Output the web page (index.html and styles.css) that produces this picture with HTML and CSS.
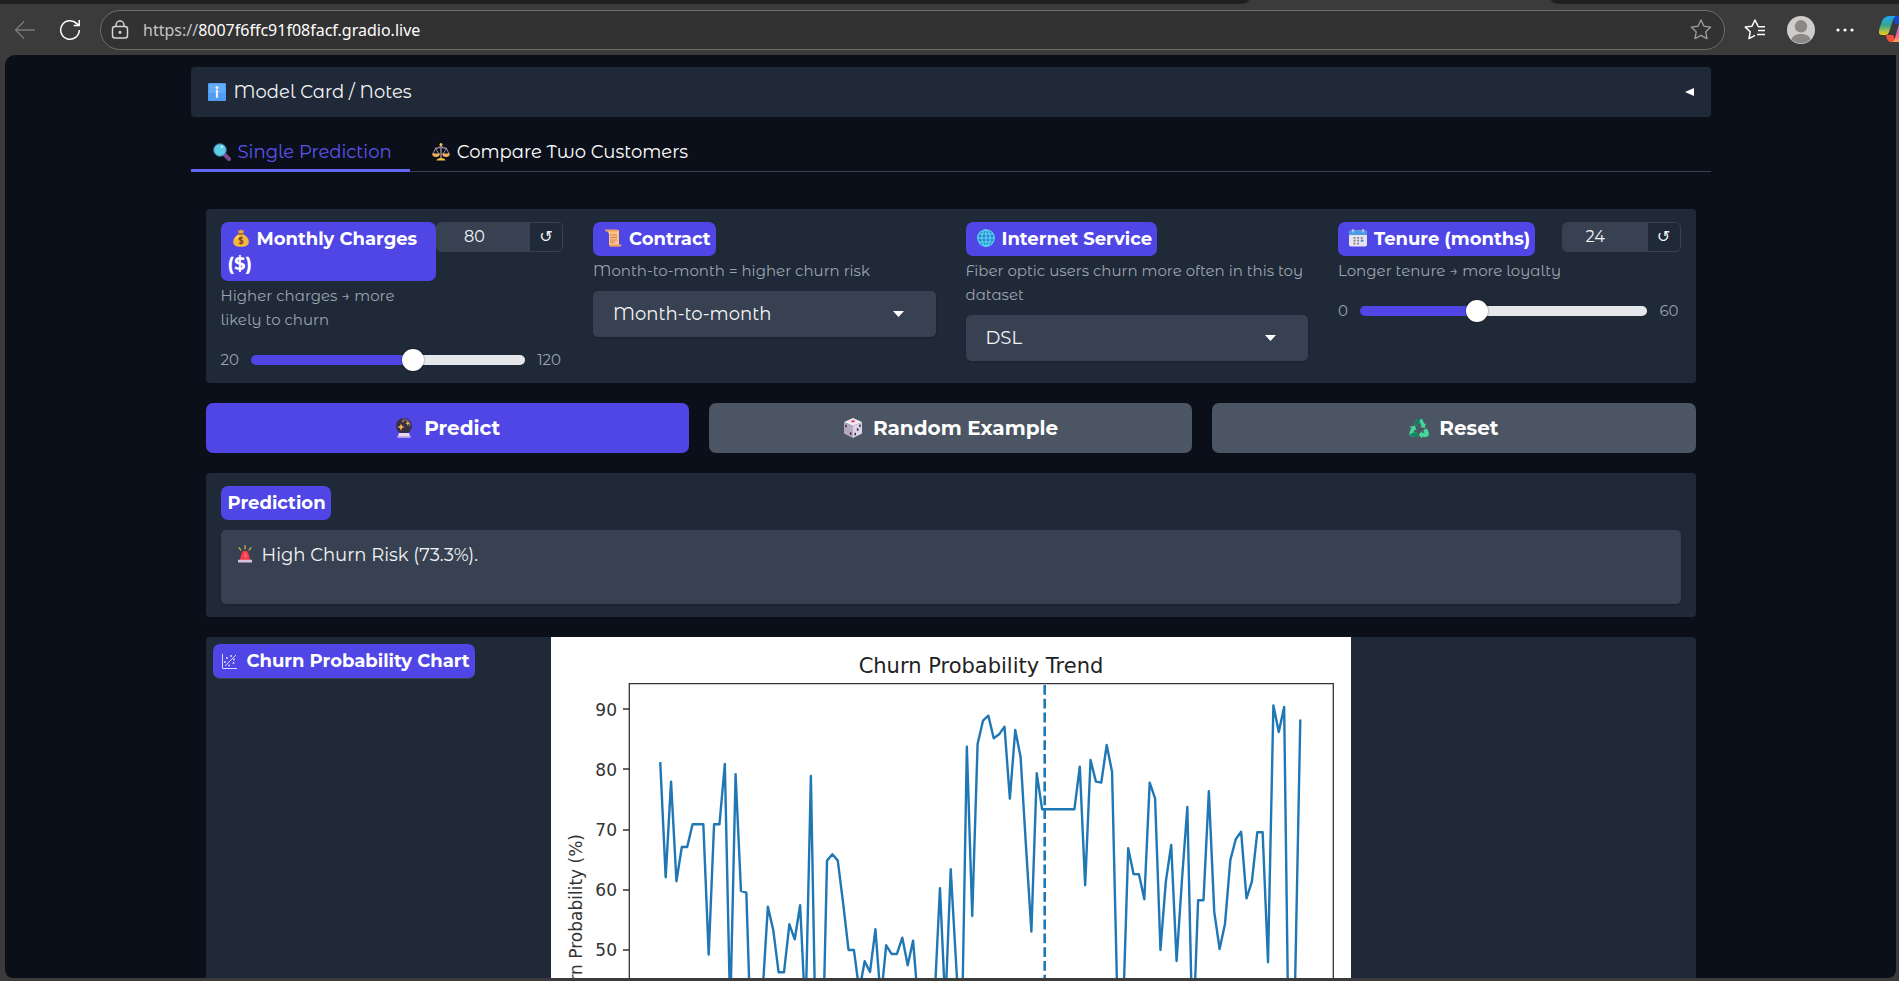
FILE: index.html
```html
<!DOCTYPE html>
<html lang="en">
<head>
<meta charset="utf-8">
<title>Churn Prediction</title>
<link rel="stylesheet" href="styles.css">
</head>
<body>
<svg class="defs" aria-hidden="true">
  <symbol id="info" viewBox="0 0 18 18"><rect width="18" height="18" rx="1" fill="#4f9df5"/><rect x="1" y="1" width="16" height="9" fill="#62adfa"/><circle cx="9" cy="4.600" r="1.400" fill="#fff"/><path d="M9 7.500v6.500" stroke="#f2ecff" stroke-width="2.200" stroke-linecap="round" fill="none"/></symbol>
  <symbol id="search" viewBox="0 0 18 18"><path d="M11 11l5 5" stroke="#7d4a8f" stroke-width="4" stroke-linecap="round"/><circle cx="7" cy="7" r="6.300" fill="#5fcdea" stroke="#386f8e"/><circle cx="9" cy="3.800" r="1.200" fill="#bdf1ff"/></symbol>
  <symbol id="scales" viewBox="0 0 18 18"><path d="M9 2v13M3 5.500q3 0 6-2 3 2 6 2" stroke="#8d7f92" stroke-width="1.600" fill="none"/><path d="M3.500 5.500L1 11M3.500 5.500L7 11M14.500 5.500L11 11M14.500 5.500L17 11" stroke="#aaa2b5" stroke-width=".9"/><path d="M0 10.500h8q-.5 3.500-4 3.500t-4-3.500zM10 10.500h8q-.5 3.500-4 3.500t-4-3.500z" fill="#f8ae58"/><path d="M4.500 17.500q.5-2.500 4.500-2.500t4.500 2.500z" fill="#f9c440"/><circle cx="9" cy="1.500" r="1.500" fill="#f9c440"/></symbol>
  <symbol id="money" viewBox="0 0 18 18"><path d="M6 1l2 .8L9 0l1.200 1.800L12 1l-1 4H7z" fill="#f0a93a"/><path d="M6.500 5h5C15 7.500 17 10 16.800 13c-.2 3-2 4.800-7.800 4.800S1.300 16 1.200 13C1 10 3 7.500 6.500 5z" fill="#f5b63c"/><path d="M4 10q1-2.500 3-3" stroke="#ffdd70" stroke-width="1.400" fill="none"/><path d="M6.300 5h5.400" stroke="#9d5b30" stroke-width="1.300"/><path d="M11 9.300q-2-1.300-3.600-.2-1 1.500 1.600 2.300 2.800.8 1.600 2.500-1.700 1.200-3.600-.2M9 7.500v8" stroke="#7a4428" stroke-width="1.200" fill="none"/></symbol>
  <symbol id="scroll" viewBox="0 0 18 18"><path d="M3 1h12v15H5V5z" fill="#fcc58c"/><path d="M1 .5h12q1.500 0 1.500 2H2.500Q1 2.500 1 .5z" fill="#f3a265"/><path d="M5 15.500h12.500q0 2.300-2 2.300H7q-2 0-2-2.300z" fill="#ef9f66"/><path d="M6 6h7M6 8.500h7M6 11h7M6 13.200h5" stroke="#ce7d48"/></symbol>
  <symbol id="globe" viewBox="0 0 18 18"><circle cx="9" cy="9" r="8.600" fill="#2687cf"/><g fill="none" stroke="#63d8f4" stroke-width="1.100"><circle cx="9" cy="9" r="8.300"/><ellipse cx="9" cy="9" rx="4.200" ry="8.300"/><path d="M9 .7v16.600M.7 9h16.600M2 5h14M2 13h14"/></g></symbol>
  <symbol id="calendar" viewBox="0 0 18 18"><rect y="1.500" width="18" height="16" rx="2" fill="#e8e4f0"/><path d="M0 6V3.500q0-2 2-2h14q2 0 2 2V6z" fill="#4a9ce4"/><path d="M4 0v3.500M14 0v3.500" stroke="#d7d3e2" stroke-width="1.300"/><path d="M4.500 8.800h10M4.500 11.700h10M4.500 14.600h6" stroke="#888197" stroke-width="1.700" stroke-dasharray="2 1.600"/><path d="M12 11.700h2.500" stroke="#378bea" stroke-width="1.700"/></symbol>
  <symbol id="crystal" viewBox="0 0 20 20"><circle cx="10" cy="8" r="8" fill="#393044"/><path d="M9 1.200a7 7 0 0 1 6.800 7" stroke="#6a5f76" stroke-width="2" fill="none"/><path d="M5 15h10l1.500 4.500h-13z" fill="#e4d7f1"/><path d="M3.500 18h13v1.500h-13z" fill="#c4abdd"/><path d="M7 5.500l1 2.600 2.600 1-2.600 1L7 12.700l-1-2.600-2.600-1 2.600-1zM13.700 3l.7 1.700 1.700.7-1.700.7-.7 1.700-.7-1.700-1.700-.7 1.700-.7zM9 1.800l.4 1 1 .4-1 .4-.4 1-.4-1-1-.4 1-.4z" fill="#ffb24c"/></symbol>
  <symbol id="dice" viewBox="0 0 20 20"><path d="M10 0l9 4-9 4-9-4z" fill="#eee9f2"/><path d="M1 4l9 4v12l-9-4.500z" fill="#b5a9c1"/><path d="M19 4l-9 4v12l9-4.500z" fill="#dcd3e4"/><ellipse cx="10" cy="3.300" rx="2" ry="1.100" fill="#ef3b60"/><g fill="#46305e"><ellipse cx="3" cy="8" rx=".9" ry="1.500"/><ellipse cx="7.700" cy="15.500" rx=".9" ry="1.500"/><ellipse cx="17" cy="7.800" rx=".9" ry="1.500"/><ellipse cx="14.700" cy="11.500" rx=".9" ry="1.500"/><ellipse cx="12.200" cy="16" rx=".9" ry="1.500"/></g></symbol>
  <symbol id="recycle" viewBox="0 0 20 20"><path d="M5.500 6.500L8 1h5l2.500 5 1.500-.8-1.300 5-4.600-1.500 1.600-1-2.400-3.900L8.600 8z" fill="#43d89a"/><path d="M5.500 6.500L8 1h3.500L8.600 8z" fill="#137862"/><path d="M.5 9l5.500-1.500 1.500 5-1.800-.8-1.200 2.800H8.200V19H4Q-.5 18.500 .5 14.500L2.200 10z" fill="#43d89a"/><path d="M4.500 14.500h3.700V19H4q-2.500-.3-3.300-2.500z" fill="#138565"/><path d="M9.500 16.800l3.500-3.800v1.700h2.500l-1.300-2.500 3.600-2 2 4.200q.8 4-3 4.600H13V20.500z" fill="#43d89a"/></symbol>
  <symbol id="siren" viewBox="0 0 18 18"><path d="M9 .3v4M2.800 2.300l2.400 3.200M15.200 2.300l-2.400 3.200" stroke="#e1b84c" stroke-width="1.200"/><path d="M3.800 15l2-7.500q.4-1.500 1.700-1.500h3q1.300 0 1.700 1.500l2 7.500z" fill="#f4384c"/><path d="M8.500 7.500q2.500 0 3 5h-4z" fill="#ff5f62"/><rect x="2" y="14.800" width="14" height="2.700" rx=".5" fill="#d8c1e3"/></symbol>
</svg>

<div class="tabstrip"><span class="inactive left"></span><span class="active"></span><span class="inactive right"></span></div>
<header class="toolbar">
  <button class="icon-btn" aria-label="Back"><svg width="22" height="20" viewBox="0 0 22 20" fill="none" stroke="#7b7b7b" stroke-width="1.300"><path d="M21 10H1.500M10 1.500L1.500 10l8.500 8.500"/></svg></button>
  <button class="icon-btn reload" aria-label="Reload"><svg width="22" height="22" viewBox="0 0 22 22" fill="none" stroke="#fff" stroke-width="1.500"><path d="M20.300 11a9.300 9.300 0 1 1-2.700-6.600l2 2M20.200 1v5.500h-5.500"/></svg></button>
  <div class="address">
    <svg width="18" height="20" viewBox="0 0 18 20" fill="none" stroke="#d5d5d5" stroke-width="1.500"><rect x="1.500" y="6.500" width="15" height="11.500" rx="2.500"/><path d="M5 6.500V5a4 4 0 0 1 8 0v1.500"/><circle cx="9" cy="12.300" r=".8" fill="#d5d5d5"/></svg>
    <span class="url"><span class="scheme">https://</span>8007f6ffc91f08facf.gradio.live</span>
    <button class="icon-btn" aria-label="Add to favorites"><svg width="22" height="21" viewBox="0 0 22 21" fill="none" stroke="#9a9a9a" stroke-width="1.400" stroke-linejoin="round"><path d="M11 1l3 6.200 6.700.9-4.900 4.700 1.200 6.800-6-3.300-6 3.300 1.200-6.800L1.300 8.100 8 7.200z"/></svg></button>
  </div>
  <div class="actions">
    <button class="icon-btn" aria-label="Favorites"><svg width="22" height="21" viewBox="0 0 22 21" fill="none" stroke="#fff" stroke-width="1.500" stroke-linejoin="round"><path d="M14 7.200l-3-6.200-3 6.200-6.700.9 4.900 4.700L5 19.600l6-3.300M14 7.200l.5.500H21M14 11.500h7M13 15.500h8"/></svg></button>
    <button class="icon-btn" aria-label="Profile"><svg width="28" height="28" viewBox="0 0 28 28"><circle cx="14" cy="14" r="14" fill="#cfcdca"/><circle cx="14" cy="10.300" r="6.200" fill="#8b8885"/><path d="M4.500 23.500c1-4 5-5.500 9.500-5.500s8.500 1.500 9.500 5.500a14 14 0 0 1-19 0z" fill="#8b8885"/></svg></button>
    <button class="icon-btn" aria-label="More"><svg width="18" height="4" viewBox="0 0 18 4" fill="#fff"><circle cx="2" cy="2" r="1.600"/><circle cx="9" cy="2" r="1.600"/><circle cx="16" cy="2" r="1.600"/></svg></button>
    <button class="icon-btn copilot" aria-label="Copilot"><svg width="30" height="27" viewBox="0 0 30 27"><defs><linearGradient id="c1" x2="0" y2="1"><stop offset="0" stop-color="#1ba8f2"/><stop offset=".5" stop-color="#3aa58c"/><stop offset="1" stop-color="#f5cf17"/></linearGradient><linearGradient id="c2" x2="0" y2="1"><stop offset="0" stop-color="#b36cf5"/><stop offset=".6" stop-color="#f36399"/><stop offset="1" stop-color="#ffa14f"/></linearGradient></defs><path d="M14 0h7l3 8h-8z" fill="#1746cf"/><path d="M7 1q1-1 3-1h8q-3 0-4 4l-4 12q-1 3-4 3H3q-4 0-3-5L3 5q1-3 4-4z" fill="url(#c1)"/><path d="M7 19h7l3 7h-6q-2 0-3-3z" fill="#f0503e"/><path d="M20 8h6q4 0 3 5l-3 9q-1 4-5 4h-9q3 0 4-4z" fill="url(#c2)"/></svg></button>
  </div>
</header>

<main class="viewport">
<div class="container">
  <button class="accordion"><span class="with-icon"><svg class="ico"><use href="#info"/></svg>Model Card / Notes</span><svg width="9" height="8" viewBox="0 0 9 8"><path d="M0 4l9-4v8z" fill="#fff"/></svg></button>
  <nav class="tabs" role="tablist">
    <button class="tab selected" role="tab" aria-selected="true"><svg class="ico"><use href="#search"/></svg>Single Prediction</button>
    <button class="tab" role="tab" aria-selected="false"><svg class="ico"><use href="#scales"/></svg>Compare Two Customers</button>
  </nav>

  <section class="content">
    <div class="panel inputs">
      <div class="field">
        <div class="head">
          <label class="tag" for="charges"><svg class="ico"><use href="#money"/></svg>Monthly Charges ($)</label>
          <div class="stepper wide"><input type="text" inputmode="numeric" value="80" aria-label="Monthly charges value"><button aria-label="Reset monthly charges">↺</button></div>
        </div>
        <p class="hint narrow">Higher charges → more likely to churn</p>
        <div class="slider"><span>20</span><input id="charges" type="range" min="20" max="120" value="80" style="--fill:60%"><span>120</span></div>
      </div>
      <div class="field">
        <div class="head"><label class="tag" for="contract"><svg class="ico"><use href="#scroll"/></svg>Contract</label></div>
        <p class="hint">Month-to-month = higher churn risk</p>
        <div class="dropdown"><select id="contract"><option>Month-to-month</option></select><svg width="11" height="6" viewBox="0 0 11 6"><path d="M0 0h11L5.500 6z" fill="#fff"/></svg></div>
      </div>
      <div class="field">
        <div class="head"><label class="tag" for="internet"><svg class="ico"><use href="#globe"/></svg>Internet Service</label></div>
        <p class="hint">Fiber optic users churn more often in this toy dataset</p>
        <div class="dropdown"><select id="internet"><option>DSL</option></select><svg width="11" height="6" viewBox="0 0 11 6"><path d="M0 0h11L5.500 6z" fill="#fff"/></svg></div>
      </div>
      <div class="field">
        <div class="head">
          <label class="tag" for="tenure"><svg class="ico"><use href="#calendar"/></svg>Tenure (months)</label>
          <div class="stepper"><input type="text" inputmode="numeric" value="24" aria-label="Tenure value"><button aria-label="Reset tenure">↺</button></div>
        </div>
        <p class="hint">Longer tenure → more loyalty</p>
        <div class="slider"><span>0</span><input id="tenure" type="range" min="0" max="60" value="24" style="--fill:40%"><span>60</span></div>
      </div>
    </div>

    <div class="buttons">
      <button class="btn primary"><svg class="ico large"><use href="#crystal"/></svg>Predict</button>
      <button class="btn"><svg class="ico large"><use href="#dice"/></svg>Random Example</button>
      <button class="btn"><svg class="ico large"><use href="#recycle"/></svg>Reset</button>
    </div>

    <div class="panel result">
      <label class="tag" for="prediction">Prediction</label>
      <div class="output"><svg class="ico"><use href="#siren"/></svg><textarea id="prediction" rows="2" readonly>High Churn Risk (73.3%).</textarea></div>
    </div>

    <figure class="panel plot">
      <figcaption class="tag"><svg class="plot-ico" width="15" height="15" viewBox="0 0 15 15" fill="none" stroke="#d9d6ff"><path d="M.5 0v14.500H15M3 12L14 1"/><g fill="#d9d6ff" stroke="none"><circle cx="5" cy="4" r="1"/><circle cx="3" cy="8" r="1"/><circle cx="9" cy="2" r="1"/><circle cx="7" cy="11.500" r="1"/><circle cx="11.500" cy="9" r="1"/><circle cx="12" cy="5.500" r="1"/></g></svg>Churn Probability Chart</figcaption>
      <svg class="chart" viewBox="0 0 800 600" role="img" aria-label="Churn Probability Trend">
        <rect width="800" height="600" fill="#fff"/>
        <text class="chart-title" x="430" y="36" text-anchor="middle">Churn Probability Trend</text>
        <g class="axis-text" text-anchor="end"><text x="66" y="79">90</text><text x="66" y="139">80</text><text x="66" y="199">70</text><text x="66" y="259">60</text><text x="66" y="319">50</text></g>
        <text class="axis-text" transform="translate(31 197) rotate(-90)" text-anchor="end">Churn Probability (%)</text>
        <polyline class="series" vector-effect="non-scaling-stroke" transform="translate(109.300 -7) scale(5.378 .3333)" points="0,400 1,742 2,455 3,754 4,651 5,651 6,583 7,583 8,583 9,974 10,583 11,583 12,402 13,1150 14,433 15,783 16,788 17,1300 18,1300 19,1092 20,830 21,900 22,1027 23,1027 24,883 25,928 26,826 27,1160 28,438 29,1320 30,1400 31,692 32,673 33,692 34,820 35,960 36,960 37,1083 38,994 39,1026 40,898 41,1110 42,946 43,972 44,972 45,923 46,1006 47,932 48,1130 49,1250 50,1200 51,1105 52,775 53,1130 54,718 55,1000 56,1275 57,350 58,858 59,342 60,272 61,257 62,325 63,313 64,290 65,506 66,300 67,382 68,650 69,905 70,430 71,538 77,538 78,410 79,766 80,390 81,455 82,458 83,345 84,425 85,1120 86,1170 87,655 88,732 89,733 90,808 91,458 92,505 93,960 94,755 95,645 96,993 97,750 98,531 99,1250 100,811 101,811 102,484 103,845 104,957 105,882 106,690 107,628 108,605 109,805 110,755 111,607 112,607 113,997 114,226 115,306 116,231 117,1460 118,1090 119,272"/>
        <path d="M493.700 47v483" stroke="#1f77b4" stroke-width="2.600" stroke-dasharray="9.800 4" stroke-dashoffset="-1"/>
        <path d="M78.300 46.700h704V530h-704zM72 72h6M72 132h6M72 193h6M72 253h6M72 313h6" fill="none" stroke="#333" stroke-width="1.300"/>
      </svg>
    </figure>
  </section>
</div>
</main>
</body>
</html>
```
FILE: styles.css
```css
* { box-sizing: border-box; }
body {
  margin: 0;
  height: 100vh;
  display: flex;
  flex-direction: column;
  overflow: hidden;
  background: #3b3b3b;
  color: #f3f4f6;
  font-family: "Montserrat Alternates", Montserrat, Inter, sans-serif;
  font-size: 18px;
  line-height: 24px;
}
button, input, select, textarea { font: inherit; color: inherit; margin: 0; border: 0; padding: 0; background: none; }
.defs { position: absolute; width: 0; height: 0; }

.tabstrip { display: flex; height: 4px; }
.inactive { background: #202020; }
.left { flex: 1249; border-bottom-right-radius: 8px 4px; }
.active { flex: 302; }
.right { flex: 348; border-bottom-left-radius: 8px 4px; }

.toolbar { display: flex; align-items: center; height: 51px; padding: 0 0 0 14px; }
.icon-btn { display: flex; flex: none; }
.reload { margin: 0 19px 0 23px; }
.address {
  flex: 1;
  display: flex;
  align-items: center;
  gap: 14px;
  height: 40px;
  padding: 0 12px 0 10px;
  border: 1px solid #6e6e6e;
  border-radius: 20px;
  background: #323232;
}
.url { flex: 1; font-family: "Noto Sans", sans-serif; font-size: 16px; color: #fff; }
.scheme { color: #c4c4c4; }
.actions { display: flex; align-items: center; gap: 21px; padding-left: 19px; overflow: hidden; }
.copilot { width: 20px; overflow: hidden; margin-left: 4px; }
.copilot svg { flex: none; }

.viewport { flex: 1; min-height: 0; overflow: hidden; margin: 0 3px 3px 5px; border-radius: 10px 0 8px 8px; background: #0b0f19; }
.container { max-width: 1520px; margin: 0 auto; padding-top: 12px; }
.ico { width: 18px; height: 18px; flex: none; vertical-align: -2px; }
.large { width: 20px; height: 20px; }

.accordion { display: flex; align-items: center; justify-content: space-between; width: 100%; height: 50px; padding: 0 17px; border-radius: 4px; background: #1f2937; }
.with-icon { display: flex; align-items: center; gap: 8px; }
.tabs { display: flex; margin-top: 14px; border-bottom: 1px solid #374151; }
.tab { display: flex; align-items: center; gap: 7px; height: 41px; padding: 4px 18px 0 22px; margin-bottom: -1px; border-bottom: 3px solid transparent; color: #fff; }
.selected { color: #5b54ee; border-color: #6366f1; }

.content { display: flex; flex-direction: column; gap: 20px; padding: 37px 15px 0; }
.panel { border-radius: 4px; background: #1f2937; }
.inputs { display: grid; grid-template-columns: repeat(4, 1fr); }
.field { min-width: 0; padding: 13px 15px 11px; }
.head { display: flex; align-items: flex-start; justify-content: space-between; }
.tag { display: inline-block; padding: 5px 5px 4px 7px; border-radius: 7px; background: #4f46e5; color: #fff; font-family: Montserrat, Inter, sans-serif; font-weight: 700; line-height: 25px; }
.tag .ico { margin: 0 7px 0 4px; }
.stepper { display: flex; flex: none; width: 119px; height: 30px; border: 1px solid #374151; border-radius: 5px; overflow: hidden; font-size: 16px; }
.stepper.wide { width: 127px; }
.stepper input { flex: 1; min-width: 0; padding: 0 23px; background: #374151; }
.wide input { padding-left: 27px; }
.stepper button { width: 32px; font-family: "DejaVu Sans", sans-serif; }
.hint { margin: 3px 0 8px; color: #9ca3af; font-size: 15px; }
.narrow { width: 200px; }
.dropdown { display: grid; align-items: center; }
.dropdown > * { grid-area: 1 / 1; }
.dropdown svg { justify-self: end; margin-right: 32px; pointer-events: none; }
.dropdown select { width: 100%; height: 46px; padding: 0 20px; border-radius: 5px; background: #374151; appearance: none; box-shadow: 0 1px 2px #0003; }
.slider { display: flex; align-items: center; gap: 12px; margin-top: 16px; padding-right: 2px; color: #9ca3af; font-size: 15px; }
.slider input {
  flex: 1;
  min-width: 0;
  height: 10px;
  border-radius: 5px;
  appearance: none;
  background: linear-gradient(to right, #4f46e5 var(--fill), #e5e7eb var(--fill));
}
.slider input::-webkit-slider-thumb { appearance: none; width: 22px; height: 22px; border-radius: 50%; background: #fff; box-shadow: 0 0 2px #0008; }

.buttons { display: grid; grid-template-columns: repeat(3, 1fr); gap: 20px; }
.btn { display: flex; align-items: center; justify-content: center; gap: 10px; height: 50px; border-radius: 7px; background: #4b5563; color: #fff; font-family: Montserrat, Inter, sans-serif; font-size: 20px; font-weight: 700; }
.primary { background: #4f46e5; }

.result { padding: 13px 15px; }
.result .tag { display: block; width: fit-content; }
.output { display: flex; gap: 8px; margin-top: 10px; padding: 13px 15px; border-radius: 5px; background: #374151; box-shadow: 0 1px 2px #0003; }
.output .ico { margin-top: 2px; }
.output textarea { flex: 1; height: 48px; resize: none; outline: 0; font-family: Montserrat, Inter, sans-serif; }

.plot { position: relative; display: flex; justify-content: center; margin: 0; overflow: hidden; }
.plot .tag { position: absolute; top: 7px; left: 7px; border-bottom: 1px solid #374151; }
.plot-ico { margin: 0 10px 0 2px; vertical-align: -2px; }
.chart { width: 800px; max-width: 100%; }
.chart-title { font: 21px "DejaVu Sans", sans-serif; fill: #222; }
.axis-text { font: 17px "DejaVu Sans", sans-serif; fill: #333; }
.series { fill: none; stroke: #1f77b4; stroke-width: 2.4px; stroke-linejoin: round; stroke-linecap: square; }
```
